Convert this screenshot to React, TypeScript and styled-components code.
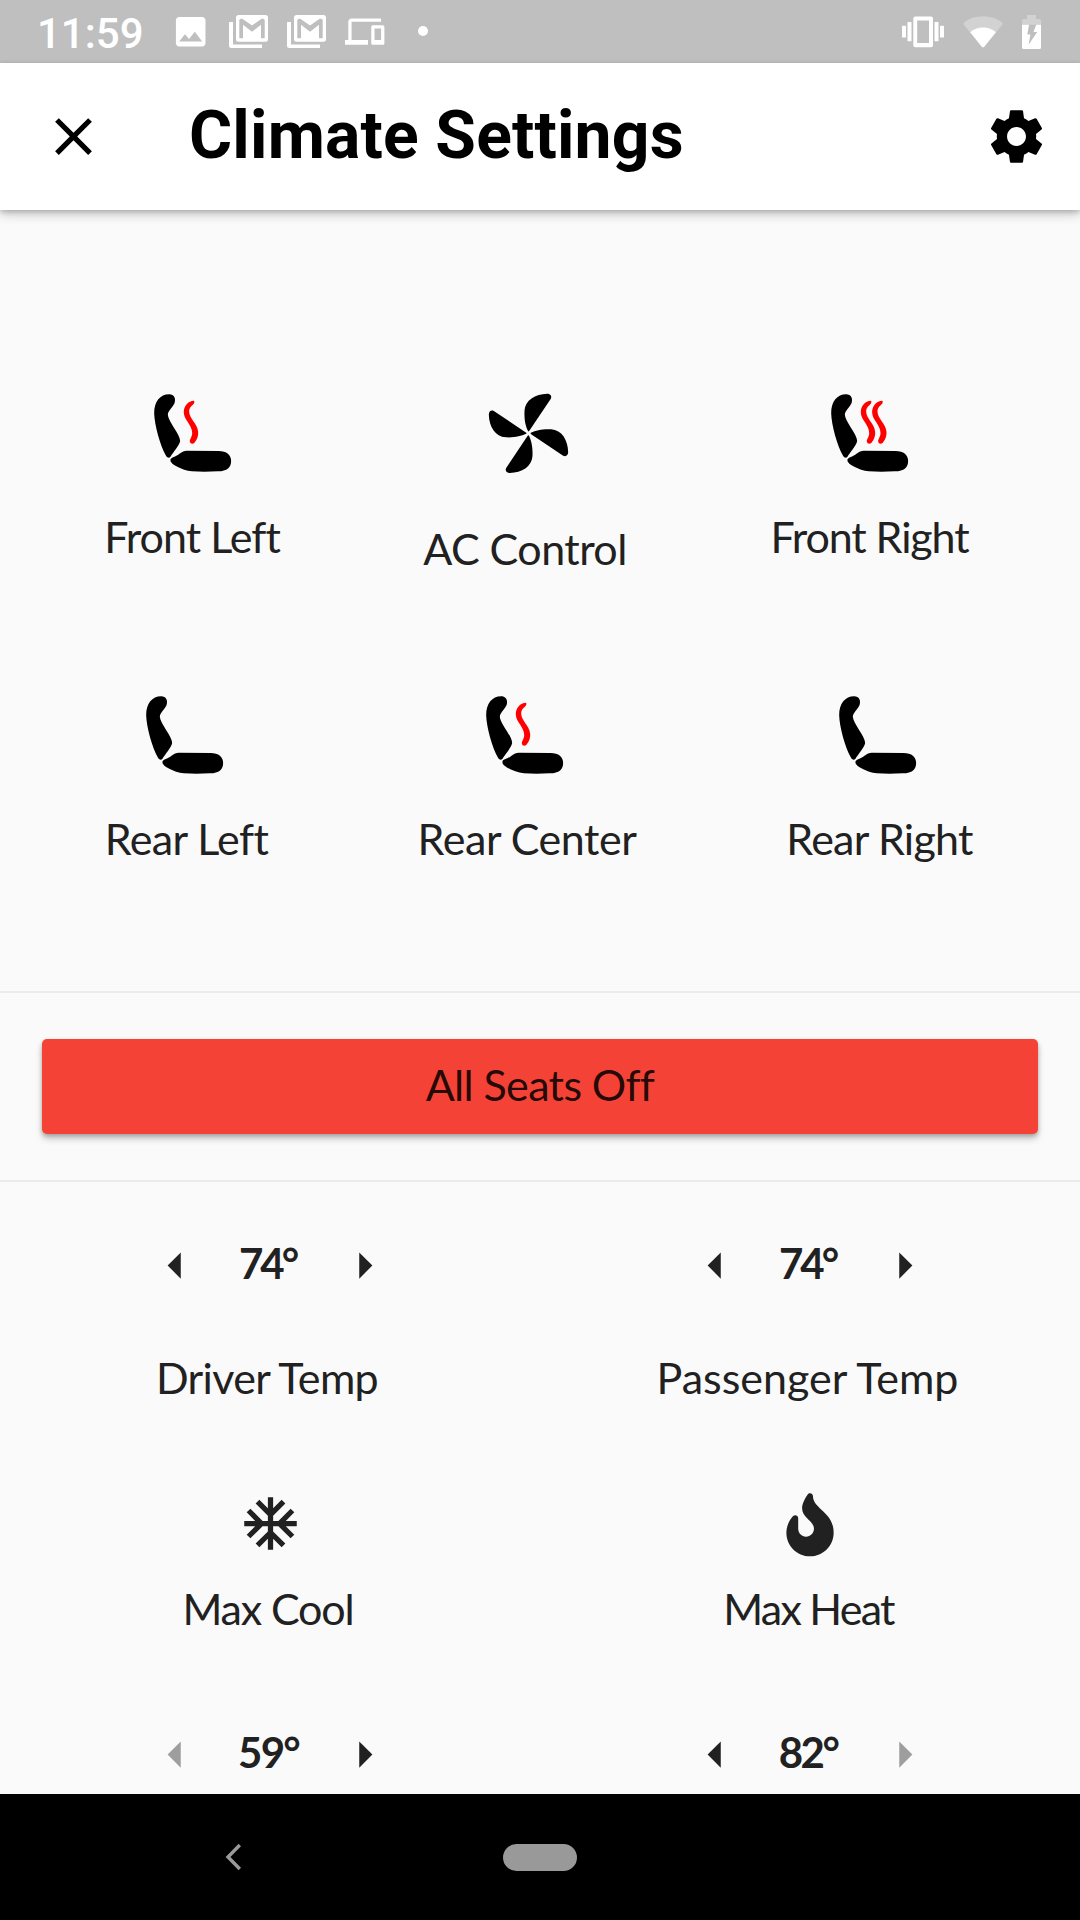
import React from 'react';
import styled, { createGlobalStyle } from 'styled-components';

const GlobalStyle = createGlobalStyle`
  * { box-sizing: border-box; }
  body { margin: 0; background: #fafafa; }
`;

const Screen = styled.div`
  width: 1080px;
  height: 1920px;
  display: flex;
  flex-direction: column;
  overflow: hidden;
  background: #fafafa;
  color: #212121;
  font-family: Lato, 'Open Sans', sans-serif;
  svg { display: block; flex: none; overflow: visible; }
`;

const StatusBar = styled.div`
  height: 63px;
  flex: none;
  display: flex;
  align-items: center;
  justify-content: space-between;
  padding: 0 39px 0 37px;
  background: #bfbfbf;
  color: #fff;
`;

const StatusGroup = styled.div<{ $gap: number }>`
  display: flex;
  align-items: center;
  gap: ${(p) => p.$gap}px;
`;

const Clock = styled.span`
  padding-top: 4px;
  margin-right: 9px;
  font: 500 42px/50px Roboto, sans-serif;
`;

const MoreDot = styled.span`
  width: 10px;
  height: 10px;
  margin: 0 0 1px 15px;
  border-radius: 50%;
  background: #fff;
`;

const AppBar = styled.header`
  height: 147px;
  flex: none;
  display: flex;
  align-items: center;
  padding: 0 32px 0 42px;
  background: #fff;
  color: #000;
  z-index: 1;
  box-shadow: 0 5px 10px rgba(0, 0, 0, 0.18), 0 2px 5px rgba(0, 0, 0, 0.18);
`;

const Title = styled.h1`
  flex: 1;
  margin: 0 0 0 84px;
  padding-bottom: 2px;
  font: 700 66px/78px Roboto, sans-serif;
  letter-spacing: 0.17px;
`;

const IconButton = styled.button`
  display: flex;
  padding: 0;
  border: 0;
  background: none;
  color: inherit;
`;

const Seats = styled.section`
  height: 781px;
  flex: none;
  padding-top: 183px;
`;

const SeatRow = styled.div<{ $left: number; $right: number }>`
  height: 302px;
  display: flex;
  justify-content: space-between;
  padding: 0 ${(p) => p.$right}px 0 ${(p) => p.$left}px;
`;

const SeatCell = styled.div<{ $width: number; $gap: number; $shift: number }>`
  width: ${(p) => p.$width}px;
  display: flex;
  flex-direction: column;
  align-items: center;
  gap: ${(p) => p.$gap}px;
  > svg { margin-left: ${(p) => p.$shift}px; }
`;

const Label = styled.span<{ $track: number; $end?: number }>`
  margin-right: ${(p) => p.$end ?? 0}px;
  font-size: 43px;
  line-height: 54px;
  white-space: nowrap;
  letter-spacing: ${(p) => p.$track}px;
`;

const ActionBand = styled.section`
  height: 191px;
  flex: none;
  padding: 46px 42px 0;
  border-top: 2px solid #ebebeb;
  border-bottom: 2px solid #ebebeb;
`;

const AllOffButton = styled.button`
  width: 100%;
  height: 95px;
  display: flex;
  align-items: center;
  justify-content: center;
  padding: 0 0 4px;
  border: 0;
  border-radius: 5px;
  background: #f44336;
  color: rgba(0, 0, 0, 0.87);
  font-family: inherit;
  box-shadow: 0 5px 7px rgba(0, 0, 0, 0.2), 0 2px 4px rgba(0, 0, 0, 0.2);
`;

const Climate = styled.section`
  flex: 1;
  min-height: 0;
  overflow: hidden;
  display: grid;
  grid-template-columns: 1fr 1fr;
  padding-top: 52px;
`;

const Column = styled.div`
  display: flex;
  flex-direction: column;
  align-items: center;
`;

const Stepper = styled.div`
  width: 252px;
  height: 63px;
  flex: none;
  display: flex;
  align-items: center;
  justify-content: space-between;
`;

const Arrow = styled(IconButton)<{ $off?: boolean }>`
  color: ${(p) => (p.$off ? '#9e9e9e' : '#212121')};
`;

const Degrees = styled.span<{ $track: number; $end: number }>`
  padding: 0 ${(p) => p.$end}px 5px 0;
  font-size: 42px;
  line-height: 52px;
  font-weight: 700;
  letter-spacing: ${(p) => p.$track}px;
`;

const TempName = styled.div`
  margin: 54px 0 87px;
  display: flex;
`;

const Preset = styled.div`
  display: flex;
  flex-direction: column;
  align-items: center;
  gap: 27px;
  margin-bottom: 87px;
`;

const NavBar = styled.nav`
  height: 126px;
  flex: none;
  display: grid;
  grid-template-columns: 1fr auto 1fr;
  align-items: center;
  background: #000;
  color: #999;
  svg { margin-left: 225px; }
`;

const HomePill = styled.span`
  width: 74px;
  height: 27px;
  border-radius: 13.5px;
  background: #999;
`;

const Glyph = ({ d, size = 63 }: { d: string; size?: number }) => (
  <svg width={size} height={size} viewBox="0 0 24 24" fill="currentColor"><path d={d} /></svg>
);

const IMAGE = 'M21 19V5c0-1.1-.9-2-2-2H5c-1.1 0-2 .9-2 2v14c0 1.1.9 2 2 2h14c1.1 0 2-.9 2-2zM8.5 13.5l2.5 3.01L14.5 12l4.5 6H5l3.5-4.5z';
const DEVICES = 'M4 6h18V4H4c-1.1 0-2 .9-2 2v11H0v3h14v-3H4V6zm19 2h-6c-.55 0-1 .45-1 1v10c0 .55.45 1 1 1h6c.55 0 1-.45 1-1V9c0-.55-.45-1-1-1zm-1 9h-4v-7h4v7z';
const CLOSE = 'M19 6.41L17.59 5 12 10.59 6.41 5 5 6.41 10.59 12 5 17.59 6.41 19 12 13.41 17.59 19 19 17.59 13.41 12z';
const GEAR = 'M19.43 12.98c.04-.32.07-.64.07-.98s-.03-.66-.07-.98l2.11-1.65c.19-.15.24-.42.12-.64l-2-3.46c-.12-.22-.39-.3-.61-.22l-2.49 1c-.52-.4-1.08-.73-1.69-.98l-.38-2.65C14.46 2.18 14.25 2 14 2h-4c-.25 0-.46.18-.49.42l-.38 2.65c-.61.25-1.17.59-1.69.98l-2.49-1c-.23-.09-.49 0-.61.22l-2 3.46c-.13.22-.07.49.12.64l2.11 1.65c-.04.32-.07.65-.07.98s.03.66.07.98l-2.11 1.65c-.19.15-.24.42-.12.64l2 3.46c.12.22.39.3.61.22l2.49-1c.52.4 1.08.73 1.69.98l.38 2.65c.03.24.24.42.49.42h4c.25 0 .46-.18.49-.42l.38-2.65c.61-.25 1.17-.59 1.69-.98l2.49 1c.23.09.49 0 .61-.22l2-3.46c.12-.22.07-.49-.12-.64l-2.11-1.65zM12 15.6c-1.98 0-3.6-1.62-3.6-3.6s1.62-3.6 3.6-3.6 3.6 1.62 3.6 3.6-1.62 3.6-3.6 3.6z';
const LEFT = 'M14 7l-5 5 5 5V7z';
const RIGHT = 'M10 17l5-5-5-5v10z';
const SNOW = 'M22 11h-4.17l3.24-3.24-1.41-1.42L15 11h-2V9l4.66-4.66-1.42-1.41L13 6.17V2h-2v4.17L7.76 2.93 6.34 4.34 11 9v2H9L4.34 6.34 2.93 7.76 6.17 11H2v2h4.17l-3.24 3.24 1.41 1.42L9 13h2v2l-4.66 4.66 1.42 1.41L11 17.83V22h2v-4.17l3.24 3.24 1.42-1.41L13 15v-2h2l4.66 4.66 1.41-1.42L17.83 13H22z';

const MailStack = () => (
  <svg width="39" height="33" viewBox="229 15 39 33" fill="#fff">
    <path d="M229 22.5Q229 22 229.5 22H233V44.5H262V47.5Q262 48 261.5 48H231.5Q229 48 229 45.5Z" />
    <path d="M238.5 15H265.5Q268 15 268 17.5V39.2Q268 41.7 265.5 41.7H238.5Q236 41.7 236 39.2V17.5Q236 15 238.5 15Z" />
    <path fill="#bfbfbf" d="M239.3 20.5Q239.3 18.8 241 18.8H242.3L252 25.4L261.7 18.8H263Q264.7 18.8 264.7 20.5V38.3H261V24.7L252 31.8L243 24.7V38.3H239.3Z" />
  </svg>
);

const Vibrate = () => (
  <svg width="42" height="32" viewBox="903 15.5 42 32" fill="#fff">
    <path fillRule="evenodd" d="M916.3 16H932Q934 16 934 18V44.8Q934 46.8 932 46.8H916.3Q914.3 46.8 914.3 44.8V18Q914.3 16 916.3 16ZM918.2 20V42.6H930V20Z" />
    <rect x="908.5" y="21.5" width="4" height="19.3" rx=".6" /><rect x="903" y="25.2" width="4" height="11.8" rx=".6" />
    <rect x="935.5" y="21.5" width="4" height="19.3" rx=".6" /><rect x="941" y="25.2" width="4" height="11.8" rx=".6" />
  </svg>
);

const Wifi = () => (
  <svg width="40" height="32" viewBox="963.3 14.5 40 32" fill="#fff">
    <path opacity=".3" d="M964.1 23.2Q963.2 22 964.3 21.1Q972 14.7 983.3 14.7Q994.6 14.7 1002.4 21.1Q1003.5 22 1002.6 23.2L984.7 45Q983.3 46.7 981.9 45Z" />
    <path d="M970.5 30.8Q975.5 26 983.3 26Q991.2 26 996.2 30.8L984.7 45Q983.3 46.7 981.9 45Z" />
  </svg>
);

const Battery = () => (
  <svg width="19" height="34" viewBox="1022 14 19 34" fill="#fff">
    <path opacity=".3" d="M1027 14H1036V18H1039.5Q1041 18 1041 19.5V23.8H1022V19.5Q1022 18 1023.5 18H1027Z" />
    <path fillRule="evenodd" d="M1022 23.8H1041V46.5Q1041 48 1039.5 48H1023.5Q1022 48 1022 46.5ZM1029 23.8L1027.3 33.5H1030.4L1028.6 43.7L1037.2 31H1033.5L1036.2 23.8Z" />
  </svg>
);

const HEAT = 'M311 92C295 92 280 108 281 128C282 150 306 165 306 188C307 198 299 207 299 213C299 222 308 223 313 218C322 208 325 195 324 185C322 160 297 147 297 124C297 110 311 104 312 99C313 95 313 92 311 92Z';

const SeatIcon = ({ heat }: { heat: number }) => (
  <svg width="77.3" height="79" viewBox="191.5 69 232 237">
    <path d="M192 130C192 95 210 73 237 73C252 73 258 86 253 100C247 113 234 122 233 134C234 155 270 192 270 213C268 226 248 248 241 260C237 265 232 264 228 258C210 228 193 165 192 130Z" />
    <path d="M241 268C243 262 262 258 268 251C276 245 282 242 290 242L385 243C410 243 423 255 423 273C423 292 412 304 383 304C355 306 330 306 305 304C275 300 241 282 241 272Z" />
    {heat > 0 && <path fill="#f00" d={HEAT} />}
    {heat > 1 && <path fill="#f00" d={HEAT} transform="translate(34 0)" />}
  </svg>
);

const FanIcon = () => (
  <svg width="79" height="80" viewBox="266.5 69 237 240">
    {[0, 90, 180, 270].map((a) => (
      <path key={a} transform={`rotate(${a} 385 190)`} d="M383.5 183C376 167 372 150 373 122C375 90 405 72 441 71C451 71 456 78 452 86L388.5 181Q385.5 186 383.5 183Z" />
    ))}
  </svg>
);

const Flame = () => (
  <svg width="47.3" height="63" viewBox="-3 -11 384 512" fill="#212121">
    <path d="M216 23.86c0-23.8-30.65-32.77-44.15-13.04C48 191.85 224 200 224 288c0 35.63-29.11 64.46-64.85 63.99-35.17-.45-63.15-29.77-63.15-64.94v-85.51c0-21.7-26.47-32.23-41.43-16.5C27.8 213.16 0 261.33 0 320c0 105.87 86.13 192 192 192s192-86.13 192-192c0-170.29-168-193-168-296.14z" />
  </svg>
);

const Seat = ({ name, width, track, end, heat = 0, shift = 0 }: { name: string; width: number; track: number; end?: number; heat?: number; shift?: number }) => (
  <SeatCell $width={width} $gap={37.5} $shift={shift}>
    <SeatIcon heat={heat} />
    <Label $track={track} $end={end}>{name}</Label>
  </SeatCell>
);

const TempStepper = ({ value, track, end, min, max }: { value: number; track: number; end: number; min?: boolean; max?: boolean }) => (
  <Stepper>
    <Arrow $off={min}><Glyph d={LEFT} /></Arrow>
    <Degrees $track={track} $end={end}>{value}°</Degrees>
    <Arrow $off={max}><Glyph d={RIGHT} /></Arrow>
  </Stepper>
);

export default function App() {
  return (
    <Screen>
      <GlobalStyle />
      <StatusBar>
        <StatusGroup $gap={18.7}>
          <Clock>11:59</Clock>
          <Glyph d={IMAGE} size={39.4} />
          <MailStack />
          <MailStack />
          <Glyph d={DEVICES} size={39.4} />
          <MoreDot />
        </StatusGroup>
        <StatusGroup $gap={18.8}>
          <Vibrate />
          <Wifi />
          <Battery />
        </StatusGroup>
      </StatusBar>
      <AppBar>
        <IconButton><Glyph d={CLOSE} /></IconButton>
        <Title>Climate Settings</Title>
        <IconButton><Glyph d={GEAR} /></IconButton>
      </AppBar>
      <Seats>
        <SeatRow $left={104} $right={110}>
          <Seat name="Front Left" width={176} track={-0.95} heat={1} shift={2} />
          <SeatCell $width={206} $gap={49} $shift={7}>
            <FanIcon />
            <Label $track={-0.55}>AC Control</Label>
          </SeatCell>
          <Seat name="Front Right" width={200} track={-1.1} end={1} heat={2} />
        </SeatRow>
        <SeatRow $left={106} $right={104}>
          <Seat name="Rear Left" width={164} track={-0.6} end={3} shift={-7} />
          <Seat name="Rear Center" width={220} track={-0.45} end={2} heat={1} shift={-6} />
          <Seat name="Rear Right" width={190} track={-0.75} end={3} shift={-7} />
        </SeatRow>
      </Seats>
      <ActionBand>
        <AllOffButton><Label $track={-0.63}>All Seats Off</Label></AllOffButton>
      </ActionBand>
      <Climate>
        <Column>
          <TempStepper value={74} track={-3} end={5} />
          <TempName><Label $track={-0.65} $end={6}>Driver Temp</Label></TempName>
          <Preset>
            <Glyph d={SNOW} />
            <Label $track={-1.16} $end={4}>Max Cool</Label>
          </Preset>
          <TempStepper value={59} track={-1.8} end={3} min />
        </Column>
        <Column>
          <TempStepper value={74} track={-3} end={5} />
          <TempName><Label $track={0} $end={5}>Passenger Temp</Label></TempName>
          <Preset>
            <Flame />
            <Label $track={-1.75} $end={3}>Max Heat</Label>
          </Preset>
          <TempStepper value={82} track={-2.5} end={4} max />
        </Column>
      </Climate>
      <NavBar>
        <svg width="17" height="28" viewBox="0 0 17 28" fill="none" stroke="currentColor" strokeWidth="3.4"><path d="M14.8 2L3 14L14.8 26" /></svg>
        <HomePill />
      </NavBar>
    </Screen>
  );
}
